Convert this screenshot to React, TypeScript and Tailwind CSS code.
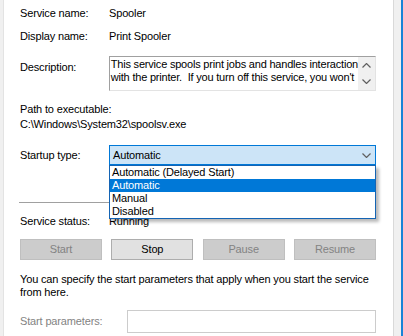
import React from "react";

function Chevron({ dir }: { dir: "up" | "down" }) {
  return (
    <svg width="9" height="5" viewBox="0 0 9 5" className="block">
      <path
        d={dir === "down" ? "M0.5 0.5 L4.5 4.5 L8.5 0.5" : "M0.5 4.5 L4.5 0.5 L8.5 4.5"}
        fill="none"
        stroke="#606060"
        strokeWidth="1.2"
      />
    </svg>
  );
}

function Btn({ label, enabled }: { label: string; enabled?: boolean }) {
  return (
    <div
      className={
        enabled
          ? "flex h-[21px] w-[82px] items-center justify-center border border-[#adadad] bg-[#e1e1e1] text-black"
          : "flex h-[21px] w-[82px] items-center justify-center border border-[#bfbfbf] bg-[#cccccc] text-[#838383]"
      }
    >
      {label}
    </div>
  );
}

export default function App() {
  return (
    <div className="flex h-[336px] w-[403px] overflow-hidden bg-[#f0f0f0] font-['Liberation_Sans',Arial,sans-serif] text-[11px] leading-[13px] tracking-[-0.15px] text-black">
      <div className="w-[4px] shrink-0 border-r border-[#e3e3e3] bg-[#f0f0f0]" />
      <div className="w-[390px] shrink-0 border-r border-[#d9d9d9] bg-white">
        <div className="flex flex-col pl-[16px] pr-[17px] pt-[7px]">
          <div className="flex h-[13px]">
            <div className="w-[89px]">Service name:</div>
            <div>Spooler</div>
          </div>
          <div className="mt-[10px] flex h-[13px]">
            <div className="w-[89px]">Display name:</div>
            <div>Print Spooler</div>
          </div>
          <div className="mt-[13px] flex">
            <div className="w-[89px] pt-[5px]">Description:</div>
            <div className="flex h-[35px] flex-1 border border-[#a0a0a0] border-b-[#e3e3e3] border-r-[#e3e3e3]">
              <div className="flex-1 overflow-hidden whitespace-pre pl-[1px] pt-[1px] tracking-[-0.2px]">
                <div>This service spools print jobs and handles interaction</div>
                <div>with the printer.  If you turn off this service, you won't</div>
              </div>
              <div className="flex w-[17px] flex-col items-center bg-[#f0f0f0] pt-[6px]">
                <Chevron dir="up" />
                <div className="mt-[11px]">
                  <Chevron dir="down" />
                </div>
              </div>
            </div>
          </div>
          <div className="mt-[12px]">Path to executable:</div>
          <div className="mt-[2px]">C:\Windows\System32\spoolsv.exe</div>
          <div className="mt-[14px] flex items-center">
            <div className="w-[89px]">Startup type:</div>
            <div className="relative flex-1">
              <div className="flex h-[20px] items-center justify-between border border-[#0078d7] bg-[#cce4f7] pl-[3px] pr-[4px]">
                <span>Automatic</span>
                <Chevron dir="down" />
              </div>
              <div className="absolute left-0 right-0 top-full z-10 border border-[#1464b4] bg-white shadow-[3px_3px_3px_rgba(0,0,0,0.28)]">
                <div className="h-[13px] pl-[2px]">Automatic (Delayed Start)</div>
                <div className="h-[13px] bg-[#0078d7] pl-[2px] text-white">Automatic</div>
                <div className="h-[13px] pl-[2px]">Manual</div>
                <div className="h-[13px] pl-[2px]">Disabled</div>
              </div>
            </div>
          </div>
          <div className="ml-[-1px] mt-[37px] h-px bg-[#a0a0a0]" />
          <div className="mt-[12px] flex h-[13px]">
            <div className="w-[89px]">Service status:</div>
            <div>Running</div>
          </div>
          <div className="mt-[11px] flex justify-between">
            <Btn label="Start" />
            <Btn label="Stop" enabled />
            <Btn label="Pause" />
            <Btn label="Resume" />
          </div>
          <div className="mt-[13px] whitespace-pre">
            <div>You can specify the start parameters that apply when you start the service</div>
            <div>from here.</div>
          </div>
          <div className="mt-[11px] flex items-center">
            <div className="w-[107px] text-[#838383]">Start parameters:</div>
            <div className="h-[23px] flex-1 border border-[#cccccc] bg-white" />
          </div>
        </div>
      </div>
      <div className="w-[7px] shrink-0 bg-[#f0f0f0]" />
      <div className="w-[2px] shrink-0 bg-[#1883d7]" />
    </div>
  );
}
